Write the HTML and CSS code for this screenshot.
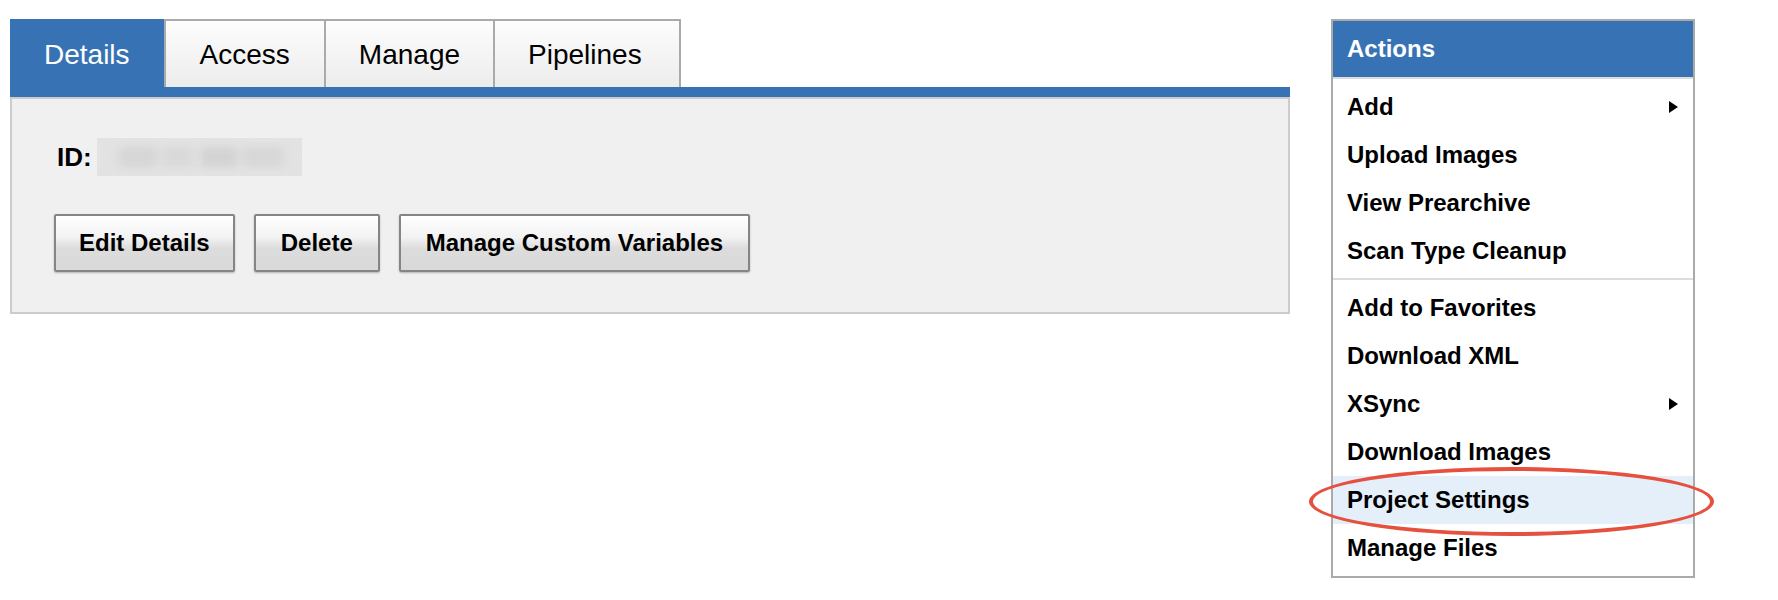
FILE: index.html
```html
<!DOCTYPE html>
<html>
<head>
<meta charset="utf-8">
<link rel="stylesheet" href="styles.css">
</head>
<body>
<div class="page">
  <div class="main">
    <div class="tabs">
      <div class="tab active">Details</div>
      <div class="tab wide">Access</div>
      <div class="tab">Manage</div>
      <div class="tab last">Pipelines</div>
    </div>
    <div class="tabbar"></div>
    <div class="panel">
      <div class="idrow"><span class="idlabel">ID:</span><span class="idblur"><span class="blurinner"></span></span></div>
      <div class="buttons">
        <button class="btn btn-edit">Edit Details</button>
        <button class="btn">Delete</button>
        <button class="btn">Manage Custom Variables</button>
      </div>
    </div>
  </div>
  <div class="actions">
    <div class="actions-head">Actions</div>
    <ul class="group">
      <li class="item sub">Add<span class="arrow"></span></li>
      <li class="item">Upload Images</li>
      <li class="item">View Prearchive</li>
      <li class="item">Scan Type Cleanup</li>
    </ul>
    <ul class="group second">
      <li class="item">Add to Favorites</li>
      <li class="item">Download XML</li>
      <li class="item sub">XSync<span class="arrow"></span></li>
      <li class="item">Download Images</li>
      <li class="item hl">Project Settings<span class="ring"></span></li>
      <li class="item">Manage Files</li>
    </ul>
  </div>
</div>
</body>
</html>
```

FILE: styles.css
```css
html, body {
  margin: 0;
  padding: 0;
  background: #fff;
}
body {
  font-family: "Liberation Sans", Arial, Helvetica, sans-serif;
  color: #000;
}
.page {
  display: flex;
  align-items: flex-start;
  padding: 19px 0 0 10px;
}
.main {
  width: 1280px;
}
.tabs {
  display: flex;
  height: 68px;
}
.tab {
  box-sizing: border-box;
  height: 68px;
  padding: 2px 33px 0;
  border: 2px solid #aaaaaa;
  border-bottom: 0;
  margin-right: -2px;
  background: linear-gradient(#fdfdfd, #ececec);
  font-size: 28px;
  line-height: 64px;
  color: #000;
}
.tab.wide {
  padding: 2px 34px 0;
}
.tab.last {
  padding-right: 37px;
}
.tab.active {
  background: #3773b4;
  border-color: #3773b4;
  color: #fff;
  position: relative;
  z-index: 1;
  margin-right: 0;
  padding: 2px 32px 0;
}
.tabbar {
  height: 10px;
  background: #3773b4;
}
.panel {
  box-sizing: border-box;
  height: 217px;
  border: 2px solid #cccccc;
  background: #f0f0f0;
  padding: 38px 0 0 42px;
}
.idrow {
  display: flex;
  align-items: center;
  height: 40px;
  padding-left: 3px;
}
.idlabel {
  font-weight: bold;
  font-size: 26px;
  line-height: 40px;
}
.idblur {
  display: block;
  width: 205px;
  height: 38px;
  margin-left: 5px;
  background: #e3e3e3;
  overflow: hidden;
}
.blurinner {
  display: block;
  width: 100%;
  height: 100%;
  background:
    linear-gradient(90deg, transparent 0 22px, #d6d6d6 22px 60px, transparent 60px 66px, #d9d9d9 66px 96px, transparent 96px 104px, #d3d3d3 104px 140px, transparent 140px 146px, #d7d7d7 146px 186px, transparent 186px) 0 9px / 100% 20px no-repeat,
    #e2e2e2;
  filter: blur(5px);
}
.buttons {
  display: flex;
  gap: 19px;
  margin-top: 37px;
}
.btn {
  box-sizing: border-box;
  height: 58px;
  padding: 0 25px;
  border: 2px solid #858585;
  border-radius: 2px;
  background: linear-gradient(#ffffff 0%, #f2f2f2 40%, #dcdcdc 60%, #d9d9d9 100%);
  box-shadow: 0 1px 2px rgba(0,0,0,0.25);
  font-family: "Liberation Sans", Arial, Helvetica, sans-serif;
  font-weight: bold;
  font-size: 24px;
  color: #000;
  line-height: 54px;
}
.btn.btn-edit {
  padding: 0 23px;
}
.actions {
  box-sizing: border-box;
  width: 364px;
  margin-left: 41px;
  border: 2px solid #aaaaaa;
  background: #fff;
}
.actions-head {
  height: 56px;
  background: #3773b4;
  color: #fff;
  font-weight: bold;
  font-size: 24px;
  line-height: 56px;
  padding: 0 14px;
  border-bottom: 2px solid #dcdcdc;
}
.group {
  list-style: none;
  margin: 0;
  padding: 4px 0 3px;
}
.group.second {
  border-top: 2px solid #dcdcdc;
  padding: 4px 0 4px;
}
.item {
  display: flex;
  align-items: center;
  justify-content: space-between;
  height: 48px;
  padding: 0 15px 0 14px;
  font-weight: bold;
  font-size: 24px;
  line-height: 48px;
  position: relative;
}
.item.hl {
  background: #e5effa;
}
.arrow {
  width: 0;
  height: 0;
  border-top: 6.5px solid transparent;
  border-bottom: 6.5px solid transparent;
  border-left: 9px solid #000;
}
.ring {
  position: absolute;
  left: -24px;
  top: -9px;
  width: 397px;
  height: 61px;
  border: 4px solid #e5503f;
  border-radius: 50%;
  pointer-events: none;
}
```
